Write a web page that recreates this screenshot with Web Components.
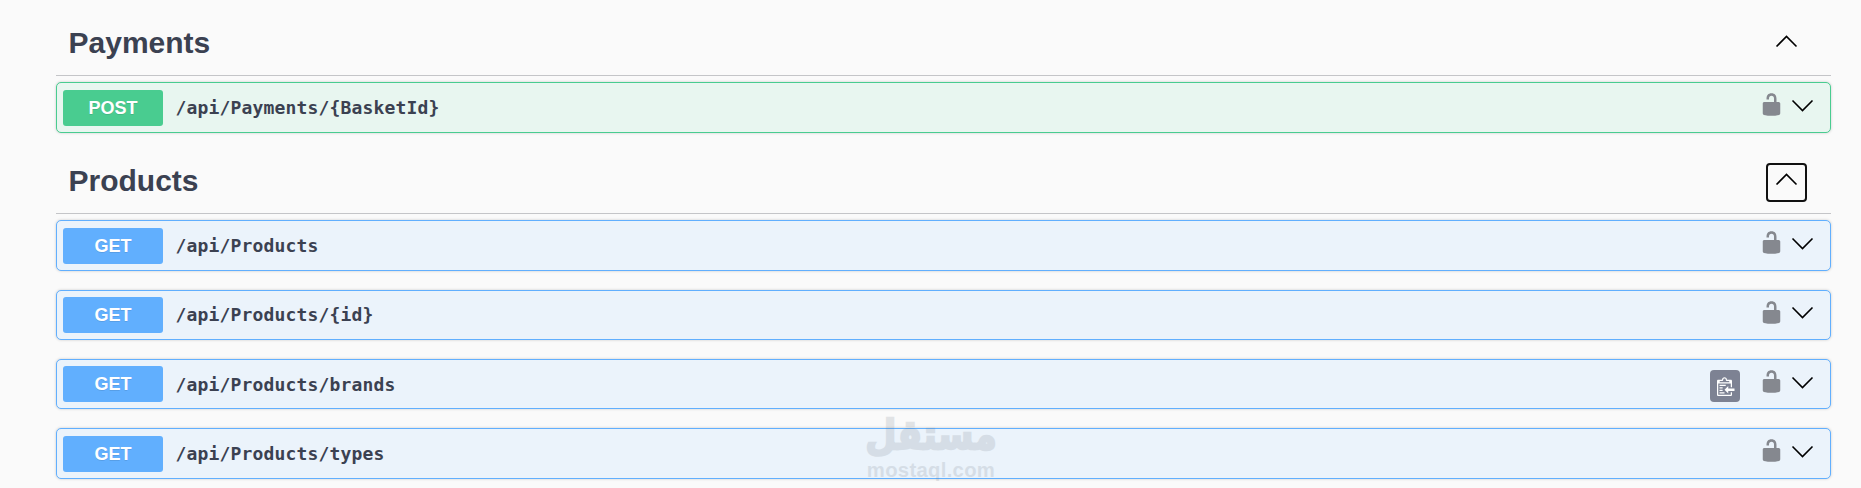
<!DOCTYPE html>
<html>
<head>
<meta charset="utf-8">
<title>API</title>
<style>
html, body { margin: 0; padding: 0; background: #fafafa; height: 100%; overflow: hidden; }
body { font-family: "Liberation Sans", Arial, sans-serif; }
</style>
</head>
<body>
<api-page>
  <api-tag name="Payments">
    <api-op method="post" path="/api/Payments/{BasketId}"></api-op>
  </api-tag>
  <api-tag name="Products" focused>
    <api-op method="get" path="/api/Products"></api-op>
    <api-op method="get" path="/api/Products/{id}"></api-op>
    <api-op method="get" path="/api/Products/brands" copy></api-op>
    <api-op method="get" path="/api/Products/types"></api-op>
  </api-tag>
</api-page>
<water-mark></water-mark>

<script>
class ApiPage extends HTMLElement {
    constructor() {
        super();
        this.attachShadow({mode: "open"}).innerHTML = `
        <style>
        :host {
            display: block;
            padding: 16px 30px 0 56px;
        }
        </style>
        <slot></slot>`;
    }
}

class ApiTag extends HTMLElement {
    constructor() {
        super();
        this.attachShadow({mode: "open"});
    }

    connectedCallback() {
        const box = this.hasAttribute("focused") ? "toggle focused" : "toggle";
        this.shadowRoot.innerHTML = `
        <style>
        :host {
            display: block;
            padding-bottom: 2.3px;
        }
        .head {
            display: flex;
            align-items: center;
            justify-content: space-between;
            height: 59px;
            padding: 0 24px 0 12.5px;
            border-bottom: 1px solid #c4c5c8;
            margin-bottom: 6.4px;
        }
        h3 {
            margin: 0 0 5px;
            font: bold 30px "Liberation Sans", Arial, sans-serif;
            color: #3b4151;
        }
        .toggle {
            box-sizing: border-box;
            width: 41px;
            height: 39px;
            margin-bottom: 2px;
            display: flex;
            align-items: center;
            justify-content: center;
            border: 2px solid transparent;
            border-radius: 4px;
            padding: 0 0 7px;
        }
        .focused { border-color: #111; }
        svg { display: block; }
        </style>
        <div class="head">
            <h3>${this.getAttribute("name")}</h3>
            <div class="${box}">
                <svg width="23" height="14" viewBox="0 0 23 14"><polyline points="1.5,12.5 11.5,2.5 21.5,12.5" fill="none" stroke="#000" stroke-width="1.6"/></svg>
            </div>
        </div>
        <slot></slot>`;
    }
}

const UNLOCK = "M15.8 8H14V5.6C14 2.703 12.665 1 10 1 7.334 1 6 2.703 6 5.6V6h2v-.801C8 3.754 8.797 3 10 3c1.203 0 2 .754 2 2.199V8H4c-.553 0-1 .646-1 1.199V17c0 .549.428 1.139.951 1.307l1.197.387C5.672 18.861 6.55 19 7.1 19h5.8c.549 0 1.428-.139 1.951-.307l1.196-.387c.524-.167.953-.757.953-1.306V9.199C17 8.646 16.352 8 15.8 8z";
const CLIP = "M2 13h4v1H2v-1zm5-6H2v1h5V7zm2 3V8l-3 3 3 3v-2h5v-2H9zM4.5 9H2v1h2.5V9zM2 12h2.5v-1H2v1zm9 1h1v2c-.02.28-.11.52-.3.7-.19.18-.42.28-.7.3H1c-.55 0-1-.45-1-1V4c0-.55.45-1 1-1h3c0-1.11.89-2 2-2 1.11 0 2 .89 2 2h3c.55 0 1 .45 1 1v5h-1V6H1v9h10v-2zM2 5h8c0-.55-.45-1-1-1H8c-.55 0-1-.45-1-1s-.45-1-1-1-1 .45-1 1-.45 1-1 1H3c-.55 0-1 .45-1 1z";

class ApiOp extends HTMLElement {
    constructor() {
        super();
        this.attachShadow({mode: "open"});
    }

    connectedCallback() {
        const post = this.getAttribute("method") == "post";
        const copy = this.hasAttribute("copy") ? `
            <div class="copy"><svg width="20" height="20" viewBox="0 0 16 16"><path fill="#fff" fill-rule="evenodd" d="${CLIP}"/></svg></div>` : "";
        this.shadowRoot.innerHTML = `
        <style>
        :host {
            --main: ${post ? "#49cc90" : "#61affe"};
            --tint: ${post ? "#e8f6f0" : "#ebf3fb"};
            display: flex;
            align-items: center;
            box-sizing: border-box;
            height: 50.5px;
            margin-bottom: 18.8px;
            padding: 0 15px 0 6px;
            background: var(--tint);
            border: 1px solid var(--main);
            border-radius: 5px;
            box-shadow: 0 0 3px rgba(0, 0, 0, .19);
        }
        .method {
            flex: none;
            width: 100px;
            height: 36px;
            text-align: center;
            background: var(--main);
            border-radius: 3px;
            color: #fff;
            font: bold 18px/36px "Liberation Sans", Arial, sans-serif;
            text-shadow: 0 1px 0 rgba(0, 0, 0, .1);
        }
        .path {
            flex: 1;
            margin: 0 0 0 12.5px;
            font: bold 18px "DejaVu Sans Mono", monospace;
            letter-spacing: .16px;
            color: #3b4151;
        }
        .copy {
            box-sizing: border-box;
            width: 30px;
            height: 32px;
            padding: 6px 0 0 7.5px;
            margin: 4px 19px 0 0;
            background: #7d8293;
            border-radius: 4px;
        }
        svg { display: block; }
        .lock { margin-bottom: 5.5px; }
        .arrow { margin: 0 0 4px 6.5px; }
        </style>
        <span class="method">${post ? "POST" : "GET"}</span>
        <span class="path">${this.getAttribute("path")}</span>${copy}
        <svg class="lock" width="25" height="25" viewBox="0 0 20 20"><path fill="#85888f" d="${UNLOCK}"/></svg>
        <svg class="arrow" width="25" height="25" viewBox="0 0 25 25"><polyline points="2.5,7.5 12.5,17.5 22.5,7.5" fill="none" stroke="#000" stroke-width="1.6"/></svg>`;
    }
}

class WaterMark extends HTMLElement {
    constructor() {
        super();
        this.attachShadow({mode: "open"}).innerHTML = `
        <style>
        :host {
            position: absolute;
            left: 860px;
            top: 410px;
            width: 142px;
            display: flex;
            flex-direction: column;
            align-items: center;
            color: #6e7882;
            opacity: .17;
            pointer-events: none;
        }
        .ar {
            font: bold 36px/50px "DejaVu Sans", sans-serif;
            -webkit-text-stroke: 2px #6e7882;
            transform: scaleY(1.15);
        }
        .en {
            font: bold 20.3px/20px "Liberation Sans", Arial, sans-serif;
            letter-spacing: .3px;
        }
        </style>
        <div class="ar" lang="ar" dir="rtl">مستقل</div>
        <div class="en">mostaql.com</div>`;
    }
}

customElements.define("api-page", ApiPage);
customElements.define("api-tag", ApiTag);
customElements.define("api-op", ApiOp);
customElements.define("water-mark", WaterMark);
</script>
</body>
</html>
